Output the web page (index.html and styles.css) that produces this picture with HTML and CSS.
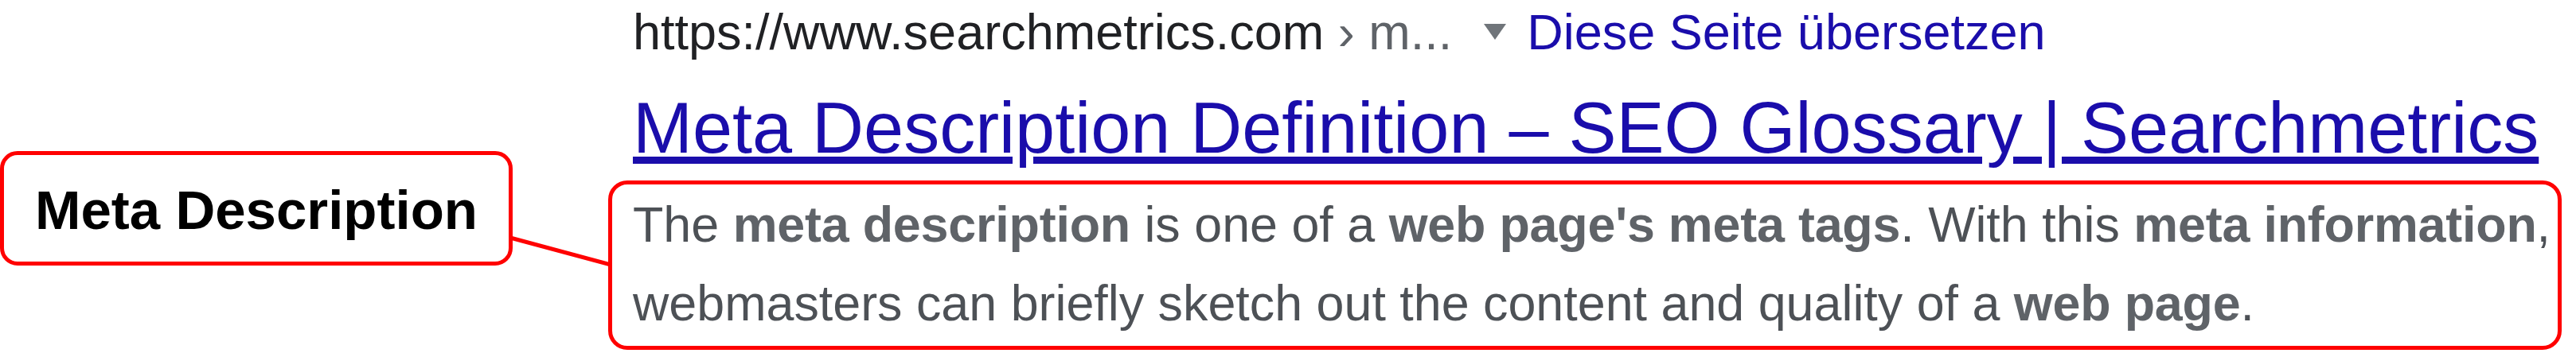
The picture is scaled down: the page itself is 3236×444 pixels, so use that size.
FILE: index.html
```html
<!DOCTYPE html>
<html lang="en">
<head>
<meta charset="utf-8">
<title>Meta Description</title>
<link rel="stylesheet" href="styles.css">
</head>
<body>
<div class="page">
  <div class="label">Meta Description</div>
  <svg class="connector" width="120" height="444" viewBox="0 0 120 444" aria-hidden="true">
    <line x1="-3" y1="299" x2="123" y2="333" stroke="#ff0000" stroke-width="5"/>
  </svg>
  <div class="result">
    <div class="url"><span class="host">https://www.searchmetrics.com</span><span class="crumb"> › m...</span><span class="arrow"></span><a class="translate" href="#">Diese Seite übersetzen</a></div>
    <h3 class="title"><a href="#">Meta Description Definition – SEO Glossary | Searchmetrics</a></h3>
    <div class="desc">The <b>meta description</b> is one of a <b>web page's meta tags</b>. With this <b>meta information</b>,<br>webmasters can briefly sketch out the content and quality of a <b>web page</b>.</div>
  </div>
</div>
</body>
</html>
```
FILE: styles.css
```css
html, body {
  margin: 0;
  padding: 0;
  background: #ffffff;
}
body {
  font-family: "Liberation Sans", Arial, sans-serif;
  width: 3236px;
  height: 444px;
  overflow: hidden;
}
.page {
  display: flex;
  align-items: flex-start;
  width: 3236px;
}
.label {
  box-sizing: border-box;
  width: 644px;
  margin-top: 190px;
  border: 5px solid #ff0000;
  border-radius: 22px;
  padding-top: 5px;
  height: 144px;
  text-align: center;
  font-weight: bold;
  font-size: 69px;
  line-height: 129px;
  color: #000000;
  white-space: nowrap;
}
.connector {
  flex: 0 0 120px;
  overflow: visible;
  display: block;
}
.result {
  flex: 1;
  margin-right: 18px;
  min-width: 0;
}
.url {
  display: flex;
  align-items: baseline;
  padding-left: 31px;
  font-size: 63px;
  line-height: 80px;
  white-space: nowrap;
}
.host {
  color: #202124;
}
.crumb {
  color: #5f6368;
  white-space: pre;
}
.arrow {
  display: inline-block;
  width: 0;
  height: 0;
  margin: 0 26px 0 40px;
  border-style: solid;
  border-width: 20px 14px 0 14px;
  border-color: #70757a transparent transparent transparent;
  align-self: center;
}
.translate {
  color: #1a0dab;
  text-decoration: none;
}
.title {
  margin: 26px 0 0 0;
  padding-left: 31px;
  font-weight: normal;
  font-size: 90px;
  line-height: 110px;
  white-space: nowrap;
}
.title a {
  color: #1a0dab;
  text-decoration: underline;
}
.desc {
  box-sizing: border-box;
  margin-top: 11px;
  border: 5px solid #ff0000;
  border-radius: 24px;
  padding: 1px 0 4px 26px;
  font-size: 62.8px;
  line-height: 99px;
  color: #4d5156;
  white-space: nowrap;
}
.desc b {
  color: #5f6368;
  letter-spacing: -0.2px;
}
```
